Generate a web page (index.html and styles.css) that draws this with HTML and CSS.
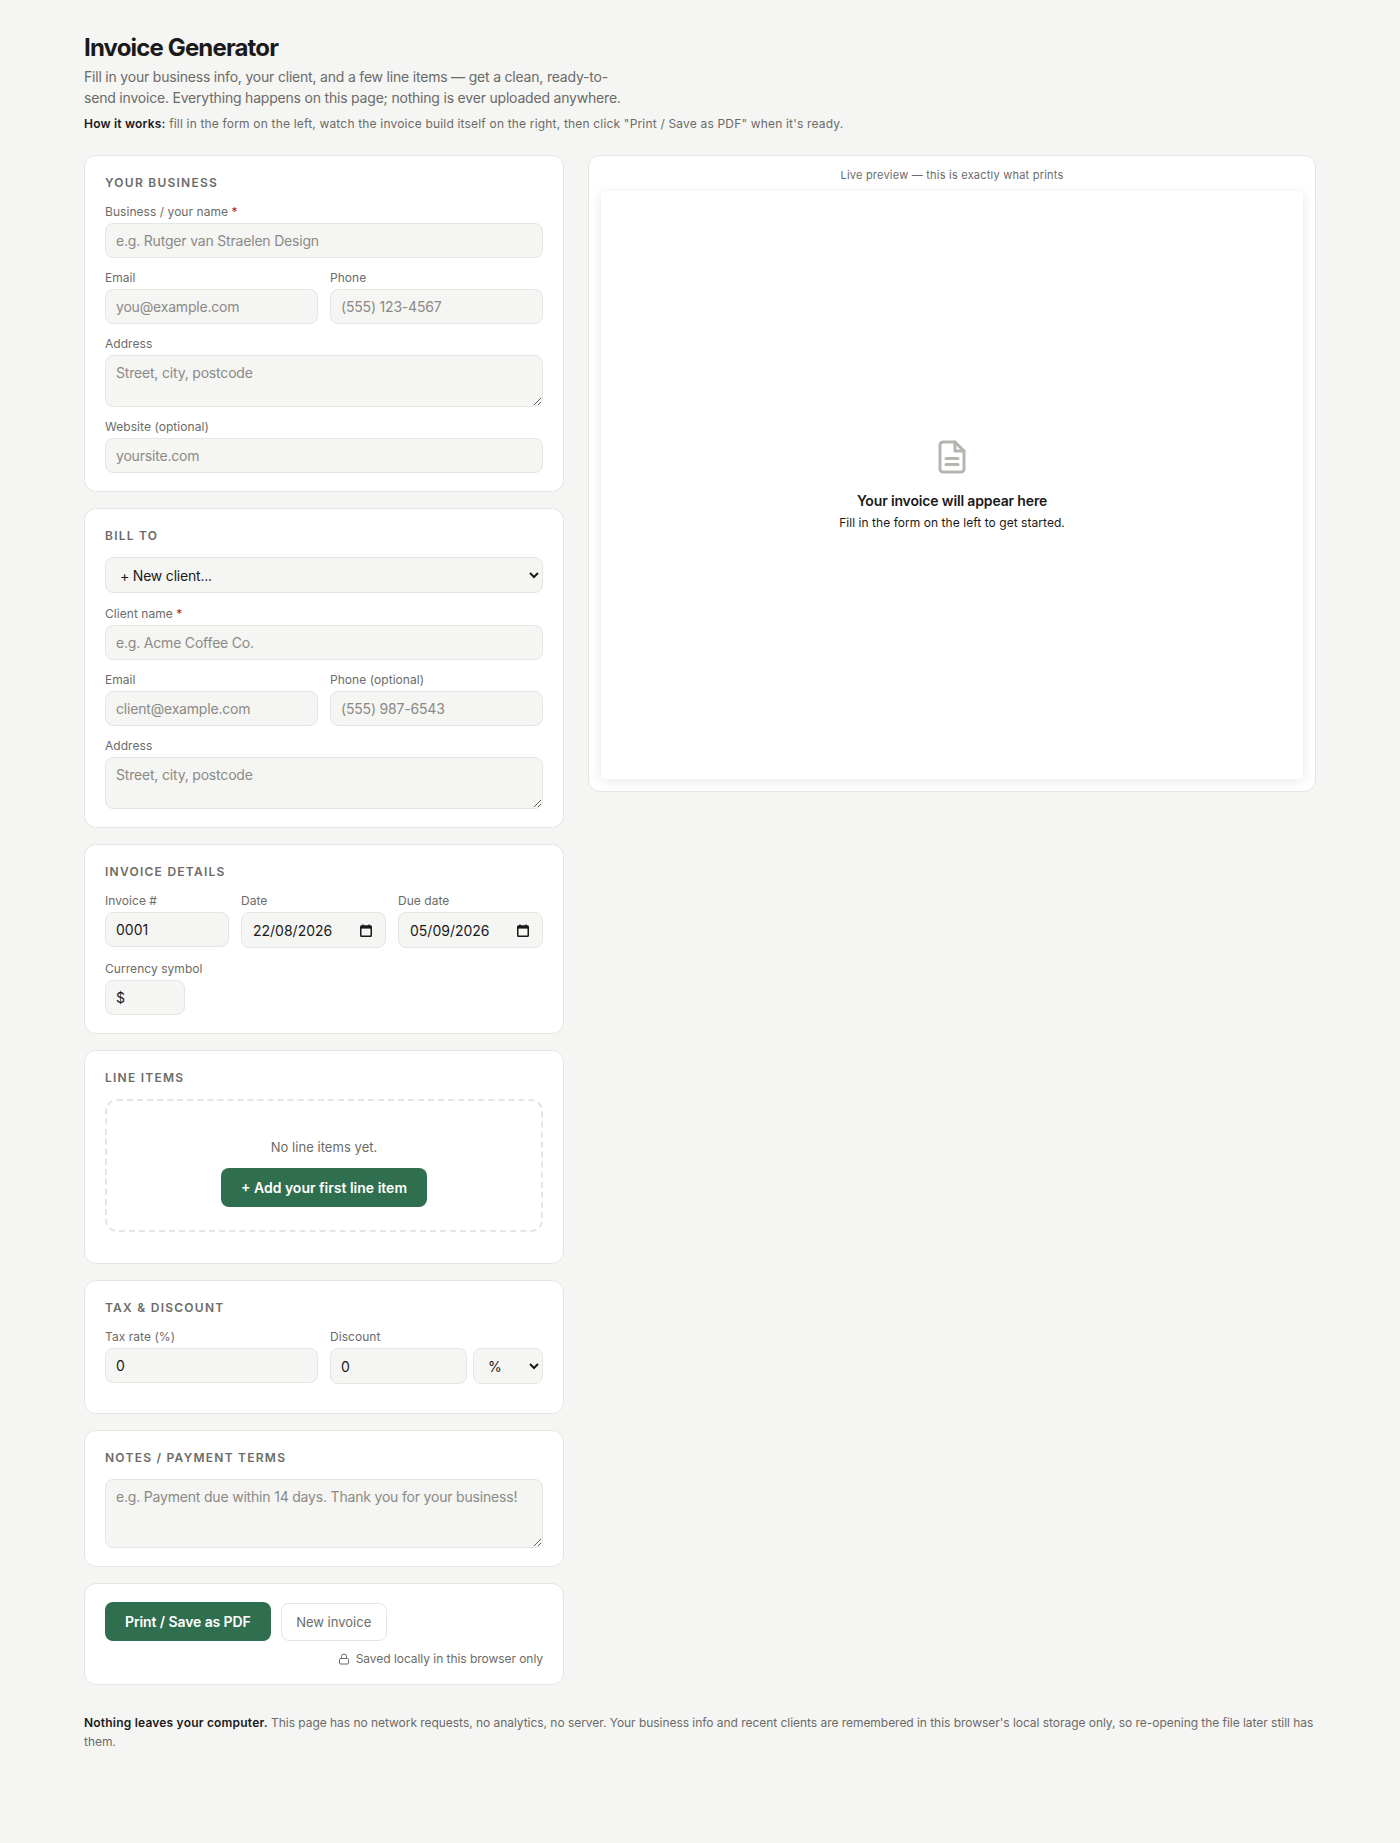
FILE: index.html
```html
<!DOCTYPE html>
<html lang="en-GB">
<head>
    <meta charset="UTF-8">
    <meta name="viewport" content="width=device-width, initial-scale=1.0">
    <title>Invoice Generator</title>
    <link rel="stylesheet" href="styles.css">
</head>
<body>
    <div class="page">
        <header class="page-head">
            <h1>Invoice Generator</h1>
            <p class="intro">Fill in your business info, your client, and a few line items — get a clean, ready-to-send invoice. Everything happens on this page; nothing is ever uploaded anywhere.</p>
            <p class="how"><strong>How it works:</strong> fill in the form on the left, watch the invoice build itself on the right, then click "Print / Save as PDF" when it's ready.</p>
        </header>

        <div class="layout">
            <div class="form-col">
                <section class="card">
                    <h2>Your business</h2>
                    <div class="field">
                        <label>Business / your name <span class="req">*</span></label>
                        <input type="text" placeholder="e.g. Rutger van Straelen Design">
                    </div>
                    <div class="row">
                        <div class="field">
                            <label>Email</label>
                            <input type="text" placeholder="you@example.com">
                        </div>
                        <div class="field">
                            <label>Phone</label>
                            <input type="text" placeholder="(555) 123-4567">
                        </div>
                    </div>
                    <div class="field">
                        <label>Address</label>
                        <textarea rows="2" placeholder="Street, city, postcode"></textarea>
                    </div>
                    <div class="field last">
                        <label>Website (optional)</label>
                        <input type="text" placeholder="yoursite.com">
                    </div>
                </section>

                <section class="card">
                    <h2>Bill to</h2>
                    <div class="field client-pick">
                        <select><option>+ New client...</option></select>
                    </div>
                    <div class="field">
                        <label>Client name <span class="req">*</span></label>
                        <input type="text" placeholder="e.g. Acme Coffee Co.">
                    </div>
                    <div class="row">
                        <div class="field">
                            <label>Email</label>
                            <input type="text" placeholder="client@example.com">
                        </div>
                        <div class="field">
                            <label>Phone (optional)</label>
                            <input type="text" placeholder="(555) 987-6543">
                        </div>
                    </div>
                    <div class="field last">
                        <label>Address</label>
                        <textarea rows="2" placeholder="Street, city, postcode"></textarea>
                    </div>
                </section>

                <section class="card">
                    <h2>Invoice details</h2>
                    <div class="row details-row">
                        <div class="field">
                            <label>Invoice #</label>
                            <input type="text" value="0001">
                        </div>
                        <div class="field">
                            <label>Date</label>
                            <div class="date-wrap">
                                <input type="text" value="22/08/2026">
                                <svg class="cal-icon" width="12" height="13" viewBox="0 0 12 13" fill="none">
                                    <rect x="0.75" y="2" width="10.5" height="10.25" rx="0.75" stroke="#1a1a1a" stroke-width="1.5"></rect>
                                    <rect x="1" y="2" width="10" height="2.6" fill="#1a1a1a"></rect>
                                    <path d="M3 0.5V2.5M9 0.5V2.5" stroke="#1a1a1a" stroke-width="1.4"></path>
                                </svg>
                            </div>
                        </div>
                        <div class="field">
                            <label>Due date</label>
                            <div class="date-wrap">
                                <input type="text" value="05/09/2026">
                                <svg class="cal-icon" width="12" height="13" viewBox="0 0 12 13" fill="none">
                                    <rect x="0.75" y="2" width="10.5" height="10.25" rx="0.75" stroke="#1a1a1a" stroke-width="1.5"></rect>
                                    <rect x="1" y="2" width="10" height="2.6" fill="#1a1a1a"></rect>
                                    <path d="M3 0.5V2.5M9 0.5V2.5" stroke="#1a1a1a" stroke-width="1.4"></path>
                                </svg>
                            </div>
                        </div>
                    </div>
                    <div class="field last currency">
                        <label>Currency symbol</label>
                        <input type="text" value="$">
                    </div>
                </section>

                <section class="card">
                    <h2>Line items</h2>
                    <div class="empty-items">
                        <p>No line items yet.</p>
                        <button class="btn-primary">+ Add your first line item</button>
                    </div>
                </section>

                <section class="card">
                    <h2>Tax &amp; discount</h2>
                    <div class="row tax-row">
                        <div class="field">
                            <label>Tax rate (%)</label>
                            <input type="text" value="0">
                        </div>
                        <div class="field">
                            <label>Discount</label>
                            <div class="discount">
                                <input type="text" value="0">
                                <select><option>%</option></select>
                            </div>
                        </div>
                    </div>
                </section>

                <section class="card">
                    <h2>Notes / payment terms</h2>
                    <div class="field last">
                        <textarea rows="3" placeholder="e.g. Payment due within 14 days. Thank you for your business!"></textarea>
                    </div>
                </section>

                <section class="card">
                    <div class="actions">
                        <button class="btn-primary btn-print">Print / Save as PDF</button>
                        <button class="btn-plain">New invoice</button>
                    </div>
                    <div class="saved">
                        <svg width="12" height="12" viewBox="0 0 24 24" fill="none" stroke="currentColor" stroke-width="2" stroke-linecap="round" stroke-linejoin="round">
                            <rect x="3" y="11" width="18" height="11" rx="2"></rect>
                            <path d="M7 11V7a5 5 0 0 1 10 0v4"></path>
                        </svg>
                        Saved locally in this browser only
                    </div>
                </section>
            </div>

            <aside class="preview">
                <div class="preview-label">Live preview — this is exactly what prints</div>
                <div class="sheet">
                    <svg class="sheet-icon" width="36" height="36" viewBox="0 0 24 24" fill="none" stroke="currentColor" stroke-width="2" stroke-linecap="round" stroke-linejoin="round">
                        <path d="M14 2H6a2 2 0 0 0-2 2v16a2 2 0 0 0 2 2h12a2 2 0 0 0 2-2V8z"></path>
                        <path d="M14 2v6h6"></path>
                        <path d="M16 13H8"></path>
                        <path d="M16 17H8"></path>
                    </svg>
                    <div class="sheet-title">Your invoice will appear here</div>
                    <div class="sheet-sub">Fill in the form on the left to get started.</div>
                </div>
            </aside>
        </div>

        <p class="foot"><strong>Nothing leaves your computer.</strong> This page has no network requests, no analytics, no server. Your business info and recent clients are remembered in this browser's local storage only, so re-opening the file later still has them.</p>
    </div>
</body>
</html>
```

FILE: styles.css
```css
* {
    box-sizing: border-box;
}

body {
    font-family: Inter, "Liberation Sans", Arial, sans-serif;
    background-color: #f5f5f3;
    color: #1a1a1a;
    margin: 0;
    padding: 0;
}

.page {
    padding: 33px 84px 60px;
}

h1 {
    font-size: 24px;
    font-weight: 700;
    letter-spacing: -0.85px;
    margin: 0 0 4px;
}

.intro {
    font-size: 14px;
    line-height: 21px;
    letter-spacing: -0.2px;
    color: #6b6b68;
    max-width: 540px;
    margin: 0 0 8px;
}

.how {
    font-size: 12px;
    line-height: 15px;
    letter-spacing: 0.18px;
    color: #6b6b68;
    margin: 0 0 24px;
}

.how strong,
.foot strong {
    color: #1a1a1a;
    font-weight: 600;
    letter-spacing: 0.2px;
}

.layout {
    display: grid;
    grid-template-columns: 480px 1fr;
    gap: 24px;
    align-items: start;
}

.form-col {
    display: flex;
    flex-direction: column;
    gap: 16px;
}

.card {
    background-color: white;
    border: 1px solid #e5e5e2;
    border-radius: 12px;
    padding: 18px 20px;
}

h2 {
    font-size: 12px;
    line-height: 17px;
    font-weight: 600;
    letter-spacing: 1.25px;
    text-transform: uppercase;
    color: #6b6b68;
    margin: 0 0 13px;
}

.row {
    display: flex;
    gap: 12px;
}

.row .field {
    flex: 1;
    min-width: 0;
}

.field {
    margin-bottom: 12px;
}

.field.last {
    margin-bottom: 0;
}

label {
    display: block;
    font-size: 12px;
    line-height: 15px;
    letter-spacing: 0.05px;
    white-space: nowrap;
    color: #6b6b68;
    margin-bottom: 4px;
}

.req {
    color: #b3261e;
}

input,
textarea,
select {
    display: block;
    width: 100%;
    font-family: inherit;
    font-size: 14px;
    color: #1a1a1a;
    background-color: #f5f5f3;
    border: 1px solid #e5e5e2;
    border-radius: 8px;
    padding: 8px 10px;
}

input::placeholder,
textarea::placeholder {
    color: #8a8a86;
    letter-spacing: -0.19px;
}

textarea {
    resize: vertical;
}

select {
    height: 36px;
    letter-spacing: -0.2px;
}

.client-pick {
    margin-bottom: 13px;
}

.details-row .field {
    margin-bottom: 13px;
}

.details-row .field:first-child {
    flex: 0 0 124px;
}

.date-wrap {
    position: relative;
}

.date-wrap input {
    height: 36px;
    padding-left: 11px;
}

.cal-icon {
    position: absolute;
    right: 14px;
    top: 12px;
}

.currency {
    width: 80px;
}

.discount {
    display: flex;
    gap: 6px;
}

.discount input {
    flex: 1;
    min-width: 0;
}

.discount select {
    flex: 0 0 70px;
}

.tax-row .field {
    margin-bottom: 11px;
}

.empty-items {
    border: 2px dashed #e5e5e2;
    border-radius: 12px;
    text-align: center;
    padding: 38px 16px 23px;
    margin-bottom: 13px;
}

.empty-items p {
    font-size: 13px;
    line-height: 16px;
    letter-spacing: 0.05px;
    color: #6b6b68;
    margin: 0 0 13px;
}

.btn-primary {
    font-family: inherit;
    font-size: 14px;
    font-weight: 600;
    color: white;
    background-color: #2f6f4f;
    border: none;
    border-radius: 8px;
    padding: 11px 20px;
    cursor: pointer;
}

.btn-print {
    letter-spacing: -0.1px;
}

.btn-plain {
    font-family: inherit;
    font-size: 13px;
    color: #6b6b68;
    background-color: white;
    border: 1px solid #e5e5e2;
    border-radius: 8px;
    padding: 10px 14.5px;
    cursor: pointer;
}

.actions {
    display: flex;
    align-items: center;
    gap: 10px;
}

.saved {
    display: flex;
    align-items: center;
    justify-content: flex-end;
    gap: 6px;
    font-size: 12px;
    line-height: 15px;
    letter-spacing: -0.05px;
    color: #6b6b68;
    margin-top: 10px;
}

.preview {
    background-color: white;
    border: 1px solid #e5e5e2;
    border-radius: 12px;
    padding: 12px;
}

.preview-label {
    font-size: 11px;
    line-height: 14px;
    letter-spacing: 0.02em;
    color: #6b6b68;
    text-align: center;
    margin-bottom: 9px;
}

.sheet {
    height: 588px;
    background-color: white;
    border-radius: 4px;
    box-shadow: 0 2px 12px rgba(0, 0, 0, 0.1);
    padding-bottom: 2px;
    display: flex;
    flex-direction: column;
    align-items: center;
    justify-content: center;
}

.sheet-icon {
    color: #b5b5b0;
    margin-bottom: 17px;
}

.sheet-title {
    font-size: 14px;
    font-weight: 600;
    letter-spacing: -0.15px;
    margin-bottom: 6px;
}

.sheet-sub {
    font-size: 12px;
    letter-spacing: 0.05px;
}

.foot {
    font-size: 12px;
    line-height: 19px;
    letter-spacing: -0.04px;
    color: #6b6b68;
    margin: 28px 0 0;
}
```
